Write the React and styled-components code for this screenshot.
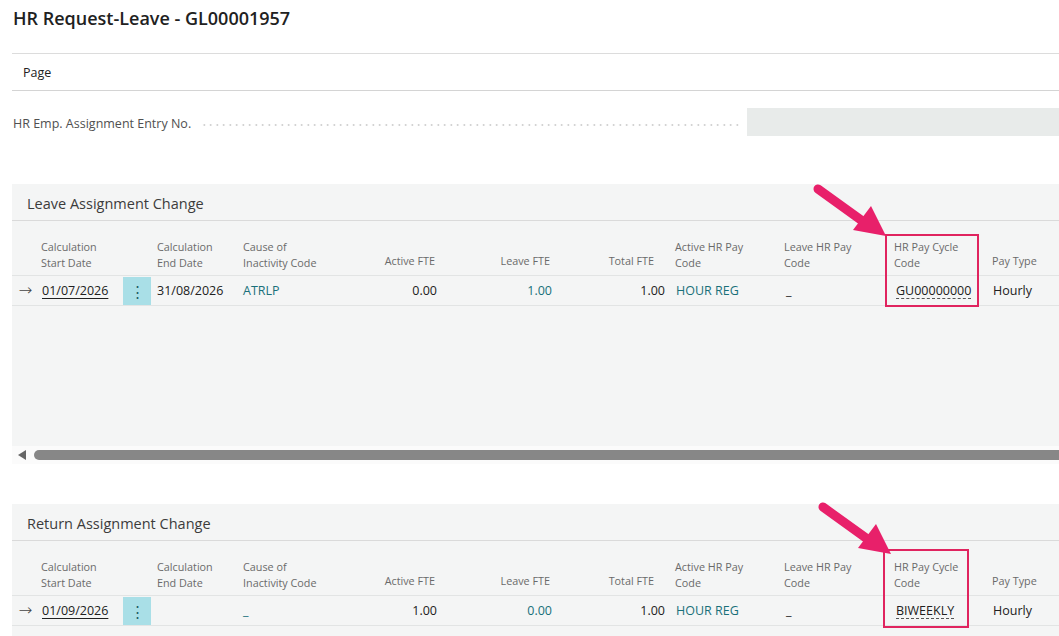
import React from "react";
import styled, { createGlobalStyle } from "styled-components";

const Global = createGlobalStyle`
  html, body { margin: 0; padding: 0; background: #fff; overflow: hidden; }
  body { font-family: "Open Sans", "Noto Sans", sans-serif; color: #212121; width: 1059px; height: 636px; }
  * { box-sizing: border-box; }
`;

const Page = styled.div`
  padding-left: 12px;
  width: 1059px;
`;

const Title = styled.h1`
  margin: 0;
  height: 54px;
  padding: 6px 0 0 1px;
  font-size: 18px;
  font-weight: 600;
  color: #212121;
  border-bottom: 1px solid #dcdcdc;
`;

const ActionBar = styled.div`
  height: 37px;
  display: flex;
  align-items: center;
  padding-left: 11px;
  font-size: 12.5px;
  color: #222;
  border-bottom: 1px solid #d4d4d4;
`;

const FieldRow = styled.div`
  display: flex;
  align-items: center;
  margin-top: 17px;
  height: 28px;
`;

const FieldLabel = styled.span`
  font-size: 12.5px;
  color: #505050;
  padding: 2px 0 0 1px;
  white-space: nowrap;
`;

const Leader = styled.span`
  flex: 1;
  height: 2px;
  margin: 5px 8px 0 10px;
  background-image: radial-gradient(circle, #c8c8c8 0.9px, transparent 1.1px);
  background-size: 6.5px 2px;
  background-repeat: repeat-x;
`;

const FieldBox = styled.div`
  width: 312px;
  height: 28px;
  background: #e8ebea;
`;

const Section = styled.section`
  position: relative;
  margin-top: ${(p) => p.$top}px;
  background: #f4f5f5;
`;

const SectionHeader = styled.div`
  height: 37px;
  display: flex;
  align-items: center;
  padding: 3px 0 0 15px;
  font-size: 14.5px;
  font-weight: 500;
  color: #3c3c3c;
  border-bottom: 1px solid #dadada;
`;

const cols = "25px 86px 28px 88px 106px 95px 115px 114px 109px 112px 98px 100px";

const Grid = styled.div`
  display: grid;
  grid-template-columns: ${cols};
`;

const HeadRow = styled(Grid)`
  height: 55px;
  align-items: end;
  border-bottom: 1px solid #e2e4e4;
`;

const HeadCell = styled.div`
  font-size: 10.8px;
  line-height: 16px;
  color: #6a6a6a;
  padding: 0 ${(p) => p.$pr ?? 4}px ${(p) => (p.$single ? 6 : 4)}px ${(p) => p.$pl ?? 4}px;
  text-align: ${(p) => (p.$right ? "right" : "left")};
  white-space: nowrap;
`;

const DataRow = styled(Grid)`
  height: 30px;
  align-items: center;
  border-bottom: 1px solid #e2e4e4;
`;

const Cell = styled.div`
  font-size: 12.5px;
  color: ${(p) => (p.$teal ? "#19707a" : "#212121")};
  padding: 0 ${(p) => p.$pr ?? 4}px 0 ${(p) => p.$pl ?? 4}px;
  text-align: ${(p) => (p.$right ? "right" : "left")};
  white-space: nowrap;
`;

const Link = styled.span`
  text-decoration: underline;
  text-underline-offset: 3px;
  text-decoration-thickness: 1px;
`;

const Dotted = styled.span`
  text-decoration: underline dashed #555;
  text-underline-offset: 3px;
  text-decoration-thickness: 1px;
`;

const RowArrow = styled.div`
  font-size: 15px;
  line-height: 1;
  color: #444;
  padding-left: 7px;
  font-family: "DejaVu Sans", sans-serif;
  font-weight: 300;
  transform: scaleX(1.1);
`;

const DotsCell = styled.div`
  height: 28px;
  background: #a9dfe7;
  display: flex;
  align-items: center;
  justify-content: center;
  font-size: 15px;
  color: #1d5c66;
`;

const Filler = styled.div`
  height: ${(p) => p.$h}px;
`;

const ScrollRow = styled.div`
  height: 18px;
  background: #fbfbfb;
  display: flex;
  align-items: center;
  padding-left: 6px;
  gap: 8px;
`;

const ScrollArrow = styled.div`
  width: 0;
  height: 0;
  border-top: 5px solid transparent;
  border-bottom: 5px solid transparent;
  border-right: 8px solid #666;
`;

const Thumb = styled.div`
  flex: 1;
  height: 10px;
  border-radius: 5px 0 0 5px;
  background: #878787;
`;

const Highlight = styled.div`
  position: absolute;
  left: ${(p) => p.$x}px;
  top: ${(p) => p.$y}px;
  width: ${(p) => p.$w}px;
  height: ${(p) => p.$h}px;
  border: 2px solid #e0245f;
  pointer-events: none;
`;

const Pointer = styled.svg`
  position: absolute;
  left: ${(p) => p.$x}px;
  top: ${(p) => p.$y}px;
  overflow: visible;
  pointer-events: none;
`;

const Arrow = ({ x, y }) => (
  <Pointer $x={x} $y={y} width="80" height="60" viewBox="0 0 80 60">
    <line x1="3" y1="3" x2={46} y2={34} stroke="#e8206a" strokeWidth="9" strokeLinecap="round" />
    <polygon points="56,20 71,50 38,44" fill="#e8206a" />
  </Pointer>
);

const headers = [
  { t: "" },
  { t: ["Calculation", "Start Date"] },
  { t: "" },
  { t: ["Calculation", "End Date"], pl: 6 },
  { t: ["Cause of", "Inactivity Code"] },
  { t: "Active FTE", right: true, pr: 5 },
  { t: "Leave FTE", right: true, pr: 5 },
  { t: "Total FTE", right: true, pr: 15 },
  { t: ["Active HR Pay", "Code"], pl: 6 },
  { t: ["Leave HR Pay", "Code"], pl: 6 },
  { t: ["HR Pay Cycle", "Code"], pl: 4 },
  { t: "Pay Type" },
];

const Header = () => (
  <HeadRow>
    {headers.map((h, i) => (
      <HeadCell
        key={i}
        $right={h.right}
        $pl={h.pl}
        $pr={h.pr}
        $single={!Array.isArray(h.t)}
      >
        {Array.isArray(h.t) ? (
          <>
            {h.t[0]}
            <br />
            {h.t[1]}
          </>
        ) : (
          h.t
        )}
      </HeadCell>
    ))}
  </HeadRow>
);

const Row = ({ d }) => (
  <DataRow>
    <RowArrow>→</RowArrow>
    <Cell $pl={5}>
      <Link>{d.start}</Link>
    </Cell>
    <DotsCell>⋮</DotsCell>
    <Cell $pl={6}>{d.end}</Cell>
    <Cell $teal>{d.cause}</Cell>
    <Cell $right $pr={3}>{d.active}</Cell>
    <Cell $right $pr={3} $teal>{d.leave}</Cell>
    <Cell $right>{d.total}</Cell>
    <Cell $pl={7} $teal>{d.payCode}</Cell>
    <Cell $pl={8}>_</Cell>
    <Cell $pl={6}>
      <Dotted>{d.cycle}</Dotted>
    </Cell>
    <Cell $pl={5}>Hourly</Cell>
  </DataRow>
);

export default function App() {
  return (
    <Page>
      <Global />
      <Title>HR Request-Leave - GL00001957</Title>
      <ActionBar>Page</ActionBar>
      <FieldRow>
        <FieldLabel>HR Emp. Assignment Entry No.</FieldLabel>
        <Leader />
        <FieldBox />
      </FieldRow>

      <Section $top={48}>
        <SectionHeader>Leave Assignment Change</SectionHeader>
        <Header />
        <Row
          d={{
            start: "01/07/2026",
            end: "31/08/2026",
            cause: "ATRLP",
            active: "0.00",
            leave: "1.00",
            total: "1.00",
            payCode: "HOUR REG",
            cycle: "GU00000000",
          }}
        />
        <Filler $h={140} />
        <Highlight $x={873} $y={50} $w={94} $h={73} />
        <Arrow x={803} y={2} />
      </Section>
      <ScrollRow>
        <ScrollArrow />
        <Thumb />
      </ScrollRow>

      <Section $top={40}>
        <SectionHeader>Return Assignment Change</SectionHeader>
        <Header />
        <Row
          d={{
            start: "01/09/2026",
            end: "",
            cause: "_",
            active: "1.00",
            leave: "0.00",
            total: "1.00",
            payCode: "HOUR REG",
            cycle: "BIWEEKLY",
          }}
        />
        <Filler $h={20} />
        <Highlight $x={871} $y={45} $w={86} $h={79} />
        <Arrow x={808} y={0} />
      </Section>
    </Page>
  );
}
